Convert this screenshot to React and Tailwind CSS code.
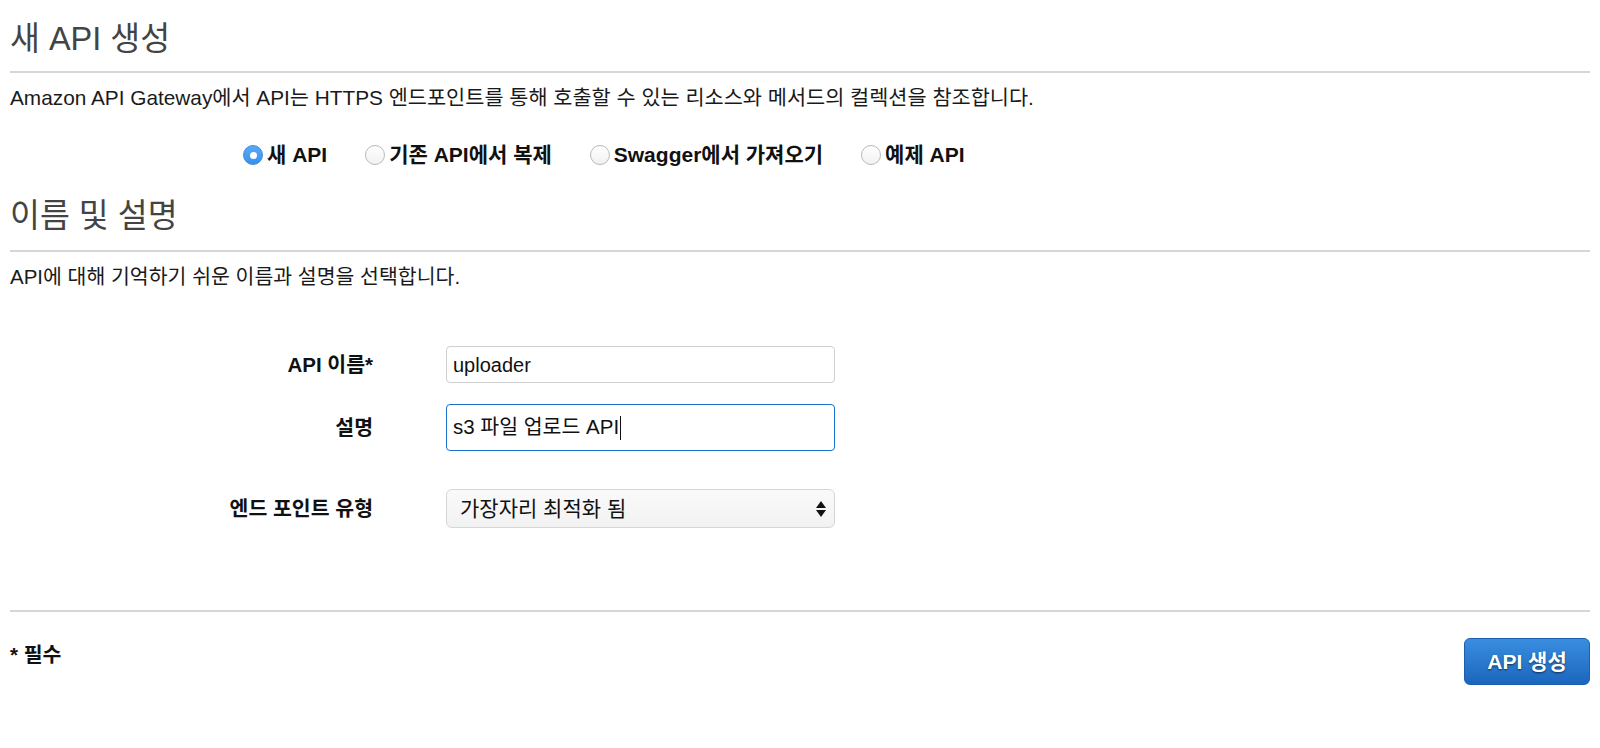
import React from "react";

const font = "font-['Liberation_Sans','Noto_Sans_CJK_KR',sans-serif]";

const Radio = ({ checked, label }) => (
  <label className="flex items-center gap-[4px]">
    {checked ? (
      <span className="flex h-[20px] w-[20px] items-center justify-center rounded-full border border-[#3b8de0] bg-gradient-to-b from-[#5aa9f7] to-[#3a90ec]">
        <span className="h-[7px] w-[7px] rounded-full bg-white" />
      </span>
    ) : (
      <span className="h-[20px] w-[20px] rounded-full border border-[#b9b9b9] bg-gradient-to-b from-white to-[#f1f1f1]" />
    )}
    <span className="text-[21px] font-bold leading-[24px] text-[#111]">{label}</span>
  </label>
);

const Field = ({ label, children, className = "" }) => (
  <div className={`grid grid-cols-[363px_389px] items-center gap-x-[73px] ${className}`}>
    <div className="text-right text-[20.5px] font-bold leading-[24px] text-[#111]">{label}</div>
    {children}
  </div>
);

export default function App() {
  const options = ["새 API", "기존 API에서 복제", "Swagger에서 가져오기", "예제 API"];

  return (
    <div className={`min-h-screen bg-white px-[10px] pt-[20px] ${font}`}>
      <h1 className="text-[32.5px] leading-[38px] text-[#444]">새 API 생성</h1>
      <div className="mt-[13px] h-[2px] bg-[#d6d6d6]" />
      <p className="mt-[13px] text-[20.8px] leading-[24px] text-[#1a1a1a]">
        Amazon API Gateway에서 API는 HTTPS 엔드포인트를 통해 호출할 수 있는 리소스와 메서드의 컬렉션을 참조합니다.
      </p>

      <div className="mt-[33px] flex items-center gap-[38px] pl-[233px]">
        {options.map((o, i) => (
          <Radio key={o} label={o} checked={i === 0} />
        ))}
      </div>

      <h2 className="mt-[30px] text-[32.5px] leading-[38px] text-[#444]">이름 및 설명</h2>
      <div className="mt-[15px] h-[2px] bg-[#d6d6d6]" />
      <p className="mt-[13px] text-[20.5px] leading-[24px] text-[#1a1a1a]">
        API에 대해 기억하기 쉬운 이름과 설명을 선택합니다.
      </p>

      <div className="mt-[57px] flex flex-col">
        <Field label="API 이름*">
          <div className="flex h-[37px] items-center rounded-[4px] border border-[#d0d0d0] bg-white px-[6px] text-[20px] text-[#111]">
            uploader
          </div>
        </Field>
        <Field label="설명" className="mt-[21px]">
          <div className="flex h-[47px] items-center rounded-[4px] border border-[#1b72c9] bg-white px-[6px] text-[20.5px] text-[#111]">
            s3 파일 업로드 API
            <span className="ml-[1px] h-[24px] w-[1px] bg-[#111]" />
          </div>
        </Field>
        <Field label="엔드 포인트 유형" className="mt-[38px]">
          <div className="flex h-[39px] items-center justify-between rounded-[6px] border border-[#d6d6d6] bg-gradient-to-b from-[#fafafa] to-[#f2f2f2] pl-[13px] pr-[8px] text-[21px] text-[#111]">
            <span>가장자리 최적화 됨</span>
            <span className="flex flex-col items-center gap-[2px]">
              <svg width="10" height="7" viewBox="0 0 10 7"><path d="M5 0 L10 7 L0 7 Z" fill="#111" /></svg>
              <svg width="10" height="7" viewBox="0 0 10 7"><path d="M0 0 L10 0 L5 7 Z" fill="#111" /></svg>
            </span>
          </div>
        </Field>
      </div>

      <div className="mt-[82px] h-[2px] bg-[#d6d6d6]" />

      <div className="mt-[26px] flex items-start justify-between">
        <div className="pt-[3px] text-[20.5px] font-bold leading-[28px] text-[#111]">* 필수</div>
        <button className="h-[47px] w-[126px] rounded-[6px] border border-[#1c5fae] bg-gradient-to-b from-[#3a8ee0] to-[#1b66bd] text-[21px] font-bold text-white [text-shadow:0_1px_2px_rgba(0,0,0,0.6)]">
          API 생성
        </button>
      </div>
    </div>
  );
}
